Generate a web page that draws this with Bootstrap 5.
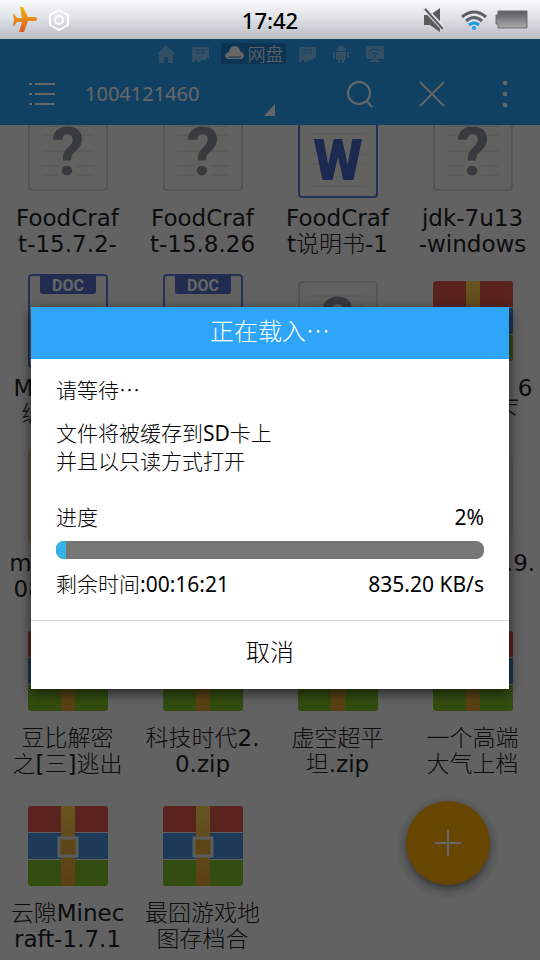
<!DOCTYPE html>
<html lang="zh-CN">
<head>
<meta charset="utf-8">
<meta name="viewport" content="width=device-width, initial-scale=1">
<title>网盘</title>
<link href="https://cdn.jsdelivr.net/npm/bootstrap@5.3.0/dist/css/bootstrap.min.css" rel="stylesheet">
<style>
body { font-family: "Noto Sans", "Noto Sans CJK SC", sans-serif; background: #f5f5f5; }
svg { display: block; flex: none; }
.status-bar { height: 39px; padding: 0 12px; background: linear-gradient(#f9fafd, #dfe2e7 45%, #b8bdc4); }
.status-side { flex: 1 1 0; }
.clock { font-size: 22px; line-height: 28px; font-weight: 500; color: #000; }
.screen { min-height: 0; }
.top-bar { height: 86px; background: #29a3f7; color: #fff; }
.tab-strip { padding-top: 4px; gap: 12px; }
.tab-link { color: #7fc6f8; height: 21px; }
.tab-current { background: #2286d0; color: #fff; padding: 0 2px 0 4px; font-size: 18px; line-height: 21px; gap: 4px; }
.tool-row { padding: 10px 23px 0 29px; gap: 46px; height: 50px; }
.account { font-size: 20px; line-height: 28px; margin: 0 26px 0 -16px; }
.corner { align-self: flex-end; margin-bottom: -8px; }
.files { margin-top: -22px; }
.tile { padding-bottom: 21px; color: #202424; text-decoration: none; }
.tile-first { padding-bottom: 16px; }
.tile-icon { height: 96px; margin-bottom: 6px; }
.tile-name { font-family: "DejaVu Sans", "Noto Sans CJK SC", sans-serif; font-size: 23px; line-height: 26px; height: 52px; white-space: nowrap; }
.fab { right: 50px; bottom: 75px; width: 84px; height: 84px; background: #ffb000; box-shadow: 0 4px 7px rgba(0,0,0,.4), 0 4px 0 9px rgba(0,50,60,.06); }
.scrim { background: rgba(0,0,0,.6); padding: 0 31px 3px; }
.dialog-box { background: #fff; color: #000; box-shadow: 0 4px 12px rgba(0,0,0,.65); font-size: 21px; line-height: 28px; }
.cjk { font-family: "Noto Sans CJK SC", sans-serif; font-weight: 300; }
.thin { font-weight: 300; }
.dialog-title { background: #2fa5f7; color: #fff; font-size: 24px; line-height: 28px; padding: 9px 0 15px; }
.dialog-content { padding: 16px 25px 22px; }
.message { margin: 16px 0 28px; }
.load-bar { height: 18px; border-radius: 8px; background: #747774; margin: 10px 0 11px; }
.load-bar .progress-bar { background: #32b5e5; }
.cancel { height: 69px; border: 0; border-top: 1px solid #d6dada; background: #fff; color: #000; font-size: 24px; line-height: 28px; padding: 0 0 8px; }
</style>
<script src="https://cdn.jsdelivr.net/npm/bootstrap@5.3.0/dist/js/bootstrap.bundle.min.js"></script>
</head>
<body>
<svg width="0" height="0" class="position-absolute" aria-hidden="true">
  <defs>
    <linearGradient id="strap" x2="0" y2="1"><stop stop-color="#ffd454"/><stop offset="1" stop-color="#e0a032"/></linearGradient>
    <symbol id="rar" viewBox="0 0 80 80">
      <path d="M0 26V3a3 3 0 0 1 3-3h74a3 3 0 0 1 3 3v23z" fill="#e2594b"/>
      <path d="M0 27h80v26H0z" fill="#4a91dc"/>
      <path d="M0 54h80v23a3 3 0 0 1-3 3H3a3 3 0 0 1-3-3z" fill="#80c12b"/>
      <path d="M0 26.500h80M0 53.500h80" stroke="#e8f0f5"/>
      <path d="M33 0h14v80H33z" fill="url(#strap)"/>
      <path d="M31 32h18v18H31z" fill="#e5b03c" stroke="#e3e6e8" stroke-width="3"/>
    </symbol>
    <symbol id="unknown" viewBox="0 0 80 80">
      <rect x="1" y="1" width="78" height="78" rx="3" fill="#f3f6f1" stroke="#ccd9da" stroke-width="2"/>
      <path d="M14 15h52M14 24h52M14 40h52M14 55h52M14 64h52" stroke="#d2d8d4"/>
      <path d="M31 52h17v14H31z" fill="#f3f6f1"/>
      <text x="40" y="64" text-anchor="middle" font-family="Roboto" font-weight="700" font-size="66" fill="#8d939c">?</text>
    </symbol>
    <symbol id="word" viewBox="0 0 80 94">
      <rect x="1" y="1" width="78" height="92" rx="3" fill="#f6f7f2" stroke="#5b7ce0" stroke-width="2"/>
      <path d="M12 20h56M12 30h56M12 50h56M12 60h56M12 82h56" stroke="#e0e3de"/>
      <text x="40" y="76" text-anchor="middle" font-family="Roboto" font-weight="900" font-size="57" fill="#4668c8">W</text>
    </symbol>
    <symbol id="doc" viewBox="0 0 80 94">
      <rect x="1" y="1" width="78" height="92" rx="3" fill="#f6f7f2" stroke="#5b7ce0" stroke-width="2"/>
      <path d="M12 0h56v17a3 3 0 0 1-3 3H15a3 3 0 0 1-3-3z" fill="#5272c8"/>
      <path d="M12 31h56" stroke="#e0e3de"/>
      <text x="40" y="17" text-anchor="middle" font-family="Roboto" font-weight="700" font-size="16" fill="#fff">DOC</text>
    </symbol>
    <symbol id="pack" viewBox="0 0 80 94"><rect x="1" y="1" width="78" height="92" rx="3" fill="#f6f2df" stroke="#e9c474" stroke-width="2"/></symbol>
    <symbol id="sdcard" viewBox="0 0 18 16"><path fill="currentColor" d="M2 1h16v11h-3v2h-4l-2 2H6v-2H4v2H1V3z"/><path d="M5 4h10M5 7h10" stroke="#29a3f7" stroke-dasharray="4 1"/></symbol>
  </defs>
</svg>

<div class="d-flex flex-column vh-100 overflow-hidden">
  <header class="status-bar flex-shrink-0 d-flex align-items-center">
    <div class="status-side d-flex align-items-center gap-2">
      <svg width="26" height="26" viewBox="0 0 26 26"><defs><linearGradient id="plane" x2="0" y2="1"><stop stop-color="#eeb50c"/><stop offset="1" stop-color="#dc5a28"/></linearGradient></defs><path fill="url(#plane)" d="M8 0h3l5 10h6q3 0 3 2t-3 2h-6l-4 11H7l3-10H5l-3 4H1l1-6-1-6h1l3 4h5z"/></svg>
      <svg width="26" height="24" viewBox="0 0 26 24" fill="none" stroke="#fff" stroke-width="2"><path d="M13 2l9 5v10l-9 5-9-5V7z" stroke-linejoin="round"/><circle cx="13" cy="12" r="4"/></svg>
    </div>
    <div class="clock">17:42</div>
    <div class="status-side d-flex align-items-center justify-content-end">
      <svg width="22" height="24" viewBox="0 0 22 24"><path fill="#5a5c5e" d="M1 7h6l10-7v24L7 17H1z"/><path d="M1 0l20 21" stroke="#dfe2e7" stroke-width="5"/><path d="M2 1l18 20" stroke="#5a5c5e" stroke-width="2"/></svg>
      <svg class="ms-3 me-2" width="26" height="20" viewBox="0 0 26 20" fill="none" stroke-width="3"><path d="M1 7q12-10 24 0M5 11q8-7 16 0" stroke="#5c6064"/><path d="M8 15q5-4 10 0" stroke="#1b9be0"/><circle cx="13" cy="18" r="2" fill="#1b9be0"/></svg>
      <svg width="33" height="19" viewBox="0 0 33 19"><defs><linearGradient id="cell" x2="0" y2="1"><stop stop-color="#58595a"/><stop offset="1" stop-color="#a9abac"/></linearGradient></defs><path d="M3 1h29v17H3v-4H1V5h2z" fill="url(#cell)" stroke="#6d6f70"/></svg>
    </div>
  </header>

  <div class="screen position-relative flex-grow-1 d-flex flex-column overflow-hidden">
    <div class="top-bar flex-shrink-0 position-relative">
      <nav class="tab-strip d-flex justify-content-center align-items-center" aria-label="位置">
        <a href="#" class="tab-link d-flex align-items-center me-1" aria-label="主页"><svg width="18" height="18" viewBox="0 0 18 18"><path fill="currentColor" d="M9 0l9 9h-2v9h-5v-6H7v6H2V9H0z"/></svg></a>
        <a href="#" class="tab-link d-flex align-items-center" aria-label="存储卡"><svg width="18" height="16"><use href="#sdcard"/></svg></a>
        <a href="#" class="tab-current d-flex align-items-center text-decoration-none cjk"><svg width="19" height="15" viewBox="0 0 19 15"><path fill="currentColor" d="M3 13a3 3 0 0 1-2-5q1-2 3-2 1-6 6-6 4 0 5 5 3 1 4 4 0 3-3 4z"/><path d="M3 11h13" stroke="#2286d0"/></svg>网盘</a>
        <a href="#" class="tab-link d-flex align-items-center" aria-label="外置存储卡"><svg width="18" height="16"><use href="#sdcard"/></svg></a>
        <a href="#" class="tab-link d-flex align-items-center mx-1" aria-label="应用"><svg width="18" height="18" viewBox="0 0 18 18"><path fill="currentColor" d="M4 6q0-3 3-4L6 0l2 1h2l2-1-1 2q3 1 3 4zM4 7h10v8h-2v3h-2v-3H8v3H6v-3H4zM1 7h2v6H1zM15 7h2v6h-2z"/></svg></a>
        <a href="#" class="tab-link d-flex align-items-center" aria-label="远程"><svg width="18" height="18" viewBox="0 0 18 18"><path fill="currentColor" d="M0 1h18v13h-6v2h3v1H3v-1h3v-2H0z"/><path d="M4 6q5-4 10 0M6 9q3-2 6 0" stroke="#29a3f7" fill="none"/><circle cx="9" cy="11" r="1" fill="#29a3f7"/></svg></a>
      </nav>
      <div class="tool-row d-flex align-items-center">
        <button type="button" class="btn p-0 border-0 text-white" aria-label="菜单"><svg width="26" height="26" viewBox="0 0 26 26" stroke="currentColor" stroke-width="2"><path d="M0 3h3M6 3h20M0 13h3M6 13h20M0 23h3M6 23h20"/></svg></button>
        <button type="button" class="account btn p-0 border-0 rounded-0 text-white flex-grow-1 d-flex justify-content-between"><span>1004121460</span><svg class="corner" width="11" height="12" viewBox="0 0 11 12"><path d="M11 0v12H0z" fill="currentColor"/></svg></button>
        <button type="button" class="btn p-0 border-0 text-white" aria-label="搜索"><svg width="26" height="28" viewBox="0 0 26 28" fill="none" stroke="currentColor" stroke-width="2"><circle cx="12" cy="13" r="11"/><path d="M19 20l6 7"/></svg></button>
        <button type="button" class="btn p-0 border-0 text-white" aria-label="关闭"><svg width="26" height="26" viewBox="0 0 26 26" stroke="currentColor" stroke-width="2"><path d="M1 1l24 24M25 1L1 25"/></svg></button>
        <button type="button" class="btn p-0 border-0 text-white" aria-label="更多"><svg width="26" height="28" viewBox="0 0 26 28" fill="currentColor"><circle cx="14" cy="3" r="2.300"/><circle cx="14" cy="14" r="2.300"/><circle cx="14" cy="25" r="2.300"/></svg></button>
      </div>
    </div>

    <main class="flex-grow-1 overflow-hidden">
      <div class="files row row-cols-4 g-0 text-center">
        <a href="#" class="col tile tile-first"><div class="tile-icon d-flex align-items-center justify-content-center"><svg width="80" height="80"><use href="#unknown"/></svg></div><div class="tile-name">FoodCraf<br>t-15.7.2-</div></a>
        <a href="#" class="col tile tile-first"><div class="tile-icon d-flex align-items-center justify-content-center"><svg width="80" height="80"><use href="#unknown"/></svg></div><div class="tile-name">FoodCraf<br>t-15.8.26</div></a>
        <a href="#" class="col tile tile-first"><div class="tile-icon d-flex align-items-center justify-content-center"><svg width="80" height="94"><use href="#word"/></svg></div><div class="tile-name">FoodCraf<br>t<span class="thin">说明书</span>-1</div></a>
        <a href="#" class="col tile tile-first"><div class="tile-icon d-flex align-items-center justify-content-center"><svg width="80" height="80"><use href="#unknown"/></svg></div><div class="tile-name">jdk-7u13<br>-windows</div></a>

        <a href="#" class="col tile"><div class="tile-icon d-flex align-items-center justify-content-center"><svg width="80" height="94"><use href="#doc"/></svg></div><div class="tile-name">Minecraft<br><span class="thin">编写教程</span></div></a>
        <a href="#" class="col tile" aria-label="文档"><div class="tile-icon d-flex align-items-center justify-content-center"><svg width="80" height="94"><use href="#doc"/></svg></div></a>
        <a href="#" class="col tile" aria-label="文件"><div class="tile-icon d-flex align-items-center justify-content-center"><svg width="80" height="80"><use href="#unknown"/></svg></div></a>
        <a href="#" class="col tile"><div class="tile-icon d-flex align-items-center justify-content-center"><svg width="80" height="80"><use href="#rar"/></svg></div><div class="tile-name">mc1.7.6_6<br><span class="thin">整合包下</span></div></a>

        <a href="#" class="col tile"><div class="tile-icon d-flex align-items-center justify-content-center"><svg width="80" height="94"><use href="#pack"/></svg></div><div class="tile-name">mc-1.7.10<br>0801.apk</div></a>
        <a href="#" class="col tile" aria-label="文件"><div class="tile-icon d-flex align-items-center justify-content-center"><svg width="80" height="94"><use href="#pack"/></svg></div></a>
        <a href="#" class="col tile" aria-label="文件"><div class="tile-icon d-flex align-items-center justify-content-center"><svg width="80" height="80"><use href="#unknown"/></svg></div></a>
        <a href="#" class="col tile"><div class="tile-icon d-flex align-items-center justify-content-center"><svg width="80" height="80"><use href="#unknown"/></svg></div><div class="tile-name">mod-1.9.9.<br>2.1.xz</div></a>

        <a href="#" class="col tile"><div class="tile-icon d-flex align-items-center justify-content-center"><svg width="80" height="80"><use href="#rar"/></svg></div><div class="tile-name"><span class="thin">豆比解密<br>之</span>[<span class="thin">三</span>]<span class="thin">逃出</span></div></a>
        <a href="#" class="col tile"><div class="tile-icon d-flex align-items-center justify-content-center"><svg width="80" height="80"><use href="#rar"/></svg></div><div class="tile-name"><span class="thin">科技时代</span>2.<br>0.zip</div></a>
        <a href="#" class="col tile"><div class="tile-icon d-flex align-items-center justify-content-center"><svg width="80" height="80"><use href="#rar"/></svg></div><div class="tile-name"><span class="thin">虚空超平<br>坦</span>.zip</div></a>
        <a href="#" class="col tile"><div class="tile-icon d-flex align-items-center justify-content-center"><svg width="80" height="80"><use href="#rar"/></svg></div><div class="tile-name"><span class="thin">一个高端<br>大气上档</span></div></a>

        <a href="#" class="col tile"><div class="tile-icon d-flex align-items-center justify-content-center"><svg width="80" height="80"><use href="#rar"/></svg></div><div class="tile-name"><span class="thin">云隙</span>Minec<br>raft-1.7.1</div></a>
        <a href="#" class="col tile"><div class="tile-icon d-flex align-items-center justify-content-center"><svg width="80" height="80"><use href="#rar"/></svg></div><div class="tile-name"><span class="thin">最囧游戏地<br>图存档合</span></div></a>
      </div>
    </main>

    <button type="button" class="fab btn rounded-circle border-0 p-0 position-absolute d-flex align-items-center justify-content-center text-white" aria-label="添加"><svg width="26" height="26" viewBox="0 0 26 26" stroke="currentColor" stroke-width="2"><path d="M13 0v26M0 13h26"/></svg></button>

    <div class="scrim position-absolute top-0 bottom-0 start-0 end-0 d-flex align-items-center">
      <section class="dialog-box w-100" role="dialog" aria-modal="true" aria-labelledby="dialog-title">
        <h1 class="dialog-title cjk text-center m-0" id="dialog-title">正在载入…</h1>
        <div class="dialog-content">
          <p class="cjk m-0">请等待…</p>
          <p class="message"><span class="thin">文件将被缓存到</span>SD<span class="thin">卡上<br>并且以只读方式打开</span></p>
          <div class="d-flex justify-content-between"><span class="thin" id="progress-label">进度</span><span>2%</span></div>
          <div class="load-bar progress" role="progressbar" aria-labelledby="progress-label" aria-valuenow="2" aria-valuemin="0" aria-valuemax="100"><div class="progress-bar" style="width: 2.4%"></div></div>
          <div class="d-flex justify-content-between"><span><span class="thin">剩余时间</span>:00:16:21</span><span>835.20 KB/s</span></div>
        </div>
        <button type="button" class="cancel cjk w-100">取消</button>
      </section>
    </div>
  </div>
</div>
</body>
</html>
